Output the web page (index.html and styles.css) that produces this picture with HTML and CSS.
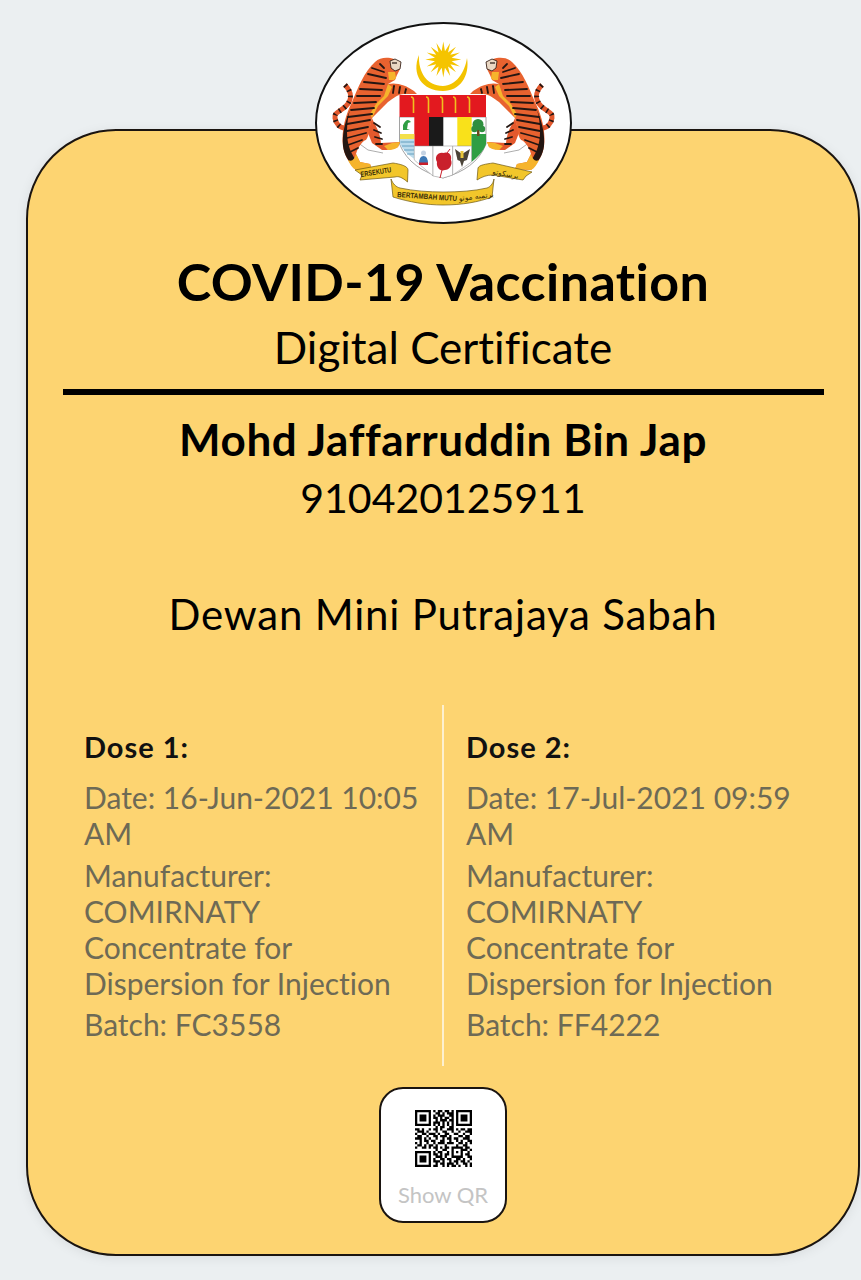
FILE: index.html
```html
<!DOCTYPE html>
<html lang="en">
<head>
<meta charset="utf-8">
<title>COVID-19 Vaccination Digital Certificate</title>
<link rel="stylesheet" href="styles.css">
</head>
<body>
<main class="card">
  <div class="crest">
    <svg class="crest-svg" viewBox="0 0 258 204" aria-hidden="true">
      <ellipse cx="129.5" cy="101" rx="127.5" ry="100" fill="#fff" stroke="#111" stroke-width="2"/>
      <polygon transform="translate(129.3 37.5)" fill="#f5c400" points="0,-18 1.66,-8.34 6.9,-16.6 4.72,-7.07 12.7,-12.7 7.07,-4.72 16.6,-6.9 8.34,-1.66 18,0 8.34,1.66 16.6,6.9 7.07,4.72 12.7,12.7 4.72,7.07 6.9,16.6 1.66,8.34 0,18 -1.66,8.34 -6.9,16.6 -4.72,7.07 -12.7,12.7 -7.07,4.72 -16.6,6.9 -8.34,1.66 -18,0 -8.34,-1.66 -16.6,-6.9 -7.07,-4.72 -12.7,-12.7 -4.72,-7.07 -6.9,-16.6 -1.66,-8.34"/>
      <path d="M105 33 C97 52 108 69 129 69 C146 69 156 54 153 36 C151 50 142 64 129 64 C113 64 104 50 105 33Z" fill="#f3c300"/>

      <path d="M85.5 95 H172 V122 C165 140 150 150 129 156 C108 150 93 140 85.5 122Z" fill="#fff" stroke="#8a8a8a" stroke-width=".8"/>
      <rect x="85.5" y="73" width="86.5" height="22" fill="#e3191f"/>
      <g stroke="#f0bf1e" stroke-width="1.6" fill="none">
        <path d="M97 75 q2.500 0 2.500 3 v13"/><path d="M112 75 q2.500 0 2.500 3 v13"/><path d="M126 75 q2.500 0 2.500 3 v13"/><path d="M139 75 q2.500 0 2.500 3 v13"/><path d="M153 75 q2.500 0 2.500 3 v13"/>
      </g>
      <rect x="100.300" y="95" width="14.700" height="29" fill="#e3191f"/>
      <rect x="115" y="95" width="14.300" height="29" fill="#1a1a1a"/>
      <rect x="143.300" y="95" width="14.400" height="29" fill="#f9e11a"/>
      <path d="M157.500 112 H172 V122 C170 128 165 134 157.500 140Z" fill="#2f9e44"/>
      <rect x="163" y="106" width="2.500" height="8" fill="#6d4a1c"/>
      <circle cx="164" cy="102.500" r="5.500" fill="#2f8f3f"/>
      <circle cx="160.500" cy="107" r="3.200" fill="#2f8f3f"/>
      <circle cx="168" cy="107" r="3.200" fill="#2f8f3f"/>
      <path d="M89 103 q4 -8 8 -3 l-3 1 l-1 6 l3 1 h-7Z" fill="#2f9e44"/>
      <rect x="86" y="112" width="14.300" height="5" fill="#f3e04a"/>
      <path d="M86 117 H100.300 V137 C94 133 89 128 86 122Z" fill="#bcdcec"/>
      <g stroke="#4d8fb5" stroke-width=".8"><path d="M86.500 120 h13.500"/><path d="M88 124 h12"/><path d="M90 128 h10"/><path d="M93 132 h7"/></g>
      <path d="M100.300 124 V138 L119 154 V124Z" fill="#fff" stroke="#8a8a8a" stroke-width=".5"/>
      <path d="M105 142 q0 -8 4.500 -8 q4.500 0 4.500 8Z" fill="#3d78b5"/>
      <circle cx="109.500" cy="131" r="2.500" fill="#c6d4e4"/>
      <rect x="105" y="140.500" width="9" height="2.500" fill="#c9202c"/>
      <path d="M119 124 V154 L129 156 L138.700 153 V124Z" fill="#fff" stroke="#8a8a8a" stroke-width=".5"/>
      <path d="M129 131 c6 -2 9 2 8 7 c2 5 -2 10 -6 10 c-5 2 -9 -3 -8 -8 c-3 -5 1 -10 6 -9Z" fill="#c9202c"/>
      <path d="M128 148 l-2 8" stroke="#c9202c" stroke-width="1"/>
      <path d="M133 131 l3 -4" stroke="#c9202c" stroke-width="1"/>
      <path d="M138.700 124 V153 L157.500 140 V124Z" fill="#fff" stroke="#8a8a8a" stroke-width=".5"/>
      <path d="M141 127 L148 132 L156 127 L153 138 L150 139 L148 145 L146 139 L143.500 138Z" fill="#4a4338"/>
      <rect x="146.500" y="129" width="3" height="7" fill="#e8c53a"/>

      <g id="tiger">
        <path d="M31 63 C38 70 38 78 32 84 C26 90 20 90 21 96 C22 102 26 106 31 106" fill="none" stroke="#e4592d" stroke-width="5"/>
        <path d="M31 63 C38 70 38 78 32 84 C26 90 20 90 21 96 C22 102 26 106 31 106" fill="none" stroke="#241612" stroke-width="5" stroke-dasharray="1.600 4.500"/>
        <path d="M43 120 L54 128 L69 131" fill="none" stroke="#8a8a8a" stroke-width=".7"/>
        <path d="M58 96 C60 102 66 108 67 121 L86 120 L84 125 C78 128 74 128 68 128 L58 121 L54 111Z" fill="#e4592d"/>
        <path d="M61 40 C66 35 74 35 80 37 L87 40 L86 47 L83 53 L81 58 L74 62 C82 60 92 63 100 69 L103 72 L90 72 C84 72 80 76 74 80 L64 90 L58 96 C56 104 56 112 52 118 C50 118 44 124 42 132 L46 140 L56 142 L58 147 L42 148 C34 140 30 132 29 124 C27 108 32 92 38 80 C44 66 50 50 61 40Z" fill="#e8622f"/>
        <path d="M36 88 C31 100 28 112 29 124 C30 132 34 140 42 146 L45 141 C37 134 33 122 33 110 C33 102 34 94 36 88Z" fill="#241612"/>
        <path d="M42 132 L46 140 L56 142 L58 147 L42 148 C38 146 36 142 34 138 C38 140 40 138 42 132Z" fill="#f6b42c"/>
        <path d="M74 62 L78 65 L74 74 L64 84 L58 96 L56 92 L62 82 L70 74Z" fill="#f6b42c"/>
        <path d="M84 125 L86 120 L78 121 L70 124 L74 128 C78 128 82 127 84 125Z" fill="#f6b42c"/>
        <path d="M74 50 L81 50 L82 56 L80 58 L75 58Z" fill="#f6b42c"/>
        <g stroke="#241612" stroke-width="1.800" fill="none" stroke-linecap="round">
          <path d="M58 46 L70 50"/><path d="M54 52 L72 56"/><path d="M50 60 L70 62"/><path d="M46 67 L68 68"/><path d="M43 74 L66 74"/><path d="M40 81 L62 80"/><path d="M37 88 L60 86"/><path d="M34 95 L58 92"/><path d="M33 102 L56 98"/><path d="M33 109 L54 105"/><path d="M33 116 L52 111"/><path d="M34 123 L48 118"/><path d="M36 130 L44 126"/>
          <path d="M60 101 L66 105"/><path d="M60 108 L67 111"/><path d="M61 115 L68 117"/><path d="M62 122 L68 122"/><path d="M80 64 L79 71"/><path d="M86 65 L85 71"/><path d="M92 67 L91 71"/><path d="M66 42 L70 46"/>
        </g>
        <path d="M76 39 L81 37 L87 40 L86 47 L81 49 L77 46Z" fill="#ead8c4" stroke="#241612" stroke-width=".8"/>
        <path d="M78 41 l5 0" stroke="#241612" stroke-width="1.200"/>
      </g>
      <use href="#tiger" transform="matrix(-1 0 0 1 259 0)"/>

      <path d="M41 148 L79 141 C86 142 94 144 94 148 L93.500 160 C88 155 84 154 81 155 L46 158 L48 153Z" fill="#f2c62b" stroke="#6d5712" stroke-width=".7"/>
      <path d="M218 150 L179 141 C172 142 165 143 164 146 L163 158 C168 155 172 153 179 153 L209 158 L212 154Z" fill="#f2c62b" stroke="#6d5712" stroke-width=".7"/>
      <path d="M77 157 C79 162 82 165 86 166 C100 169 115 170 129 170 C145 170 160 169 173 166 C176 165 179 162 180 157 L178 175 C165 180 148 183 129 183 C112 183 95 180 79 175Z" fill="#f2c62b" stroke="#6d5712" stroke-width=".7"/>
      <text class="motto" x="47" y="155" textLength="31" lengthAdjust="spacingAndGlyphs" transform="rotate(-9 47 155)">ERSEKUTU</text>
      <text class="motto" x="83" y="175" textLength="60" lengthAdjust="spacingAndGlyphs" transform="rotate(4 83 175)">BERTAMBAH MUTU</text>
      <text class="jawi" x="145" y="179" transform="rotate(-7 145 179)">برتمبه موتو</text>
      <text class="jawi" x="178" y="152" transform="rotate(10 178 152)">برسکوتو</text>
    </svg>
  </div>

  <header class="heading">
    <h1 class="title">COVID-19 Vaccination</h1>
    <p class="subtitle">Digital Certificate</p>
  </header>
  <hr class="rule">
  <h2 class="name">Mohd Jaffarruddin Bin Jap</h2>
  <p class="ident">910420125911</p>
  <p class="venue">Dewan Mini Putrajaya Sabah</p>

  <section class="doses">
    <article class="dose">
      <h3 class="dose-title">Dose 1:</h3>
      <p class="dose-line">Date: 16-Jun-2021 10:05 AM</p>
      <p class="dose-line">Manufacturer: COMIRNATY Concentrate for Dispersion for Injection</p>
      <p class="dose-line">Batch: FC3558</p>
    </article>
    <article class="dose dose-right">
      <h3 class="dose-title">Dose 2:</h3>
      <p class="dose-line">Date: 17-Jul-2021 09:59 AM</p>
      <p class="dose-line">Manufacturer: COMIRNATY Concentrate for Dispersion for Injection</p>
      <p class="dose-line">Batch: FF4222</p>
    </article>
  </section>

  <button class="qr-button" type="button">
    <svg class="qr" viewBox="0 0 25 25" aria-hidden="true">
      <path fill="#000" d="M0 0h7v7H0zM18 0h7v7h-7zM0 18h7v7H0z"/>
      <path fill="#fff" d="M1 1h5v5H1zM19 1h5v5h-5zM1 19h5v5H1z"/>
      <path fill="#000" d="M2 2h3v3H2zM20 2h3v3h-3zM2 20h3v3H2z"/>
      <path fill="none" stroke="#000" d="M8 .5h1M10 .5h2M13 .5h2M16 .5h1M9 1.500h2M12 1.500h1M14 1.500h3M8 2.500h1M10 2.500h3M15 2.500h2M8 3.500h2M11 3.500h1M13 3.500h2M16 3.500h1M9 4.500h1M11 4.500h3M15 4.500h2M8 5.500h3M12 5.500h1M14 5.500h1M16 5.500h1M8 6.500h1M10 6.500h1M12 6.500h1M14 6.500h1M16 6.500h1M9 7.500h1M11 7.500h2M15 7.500h2M0 8.500h2M3 8.500h1M6 8.500h1M8 8.500h2M11 8.500h1M14 8.500h3M18 8.500h1M20 8.500h2M23 8.500h2M1 9.500h3M5 9.500h1M9 9.500h1M12 9.500h2M16 9.500h1M19 9.500h1M22 9.500h3M0 10.500h1M3 10.500h2M6 10.500h3M10 10.500h1M13 10.500h2M17 10.500h2M21 10.500h1M24 10.500h1M1 11.500h2M5 11.500h1M8 11.500h2M11 11.500h3M15 11.500h1M19 11.500h2M22 11.500h2M0 12.500h3M4 12.500h1M6 12.500h1M9 12.500h1M12 12.500h1M14 12.500h2M17 12.500h2M21 12.500h3M2 13.500h1M4 13.500h2M7 13.500h2M11 13.500h2M15 13.500h1M18 13.500h1M20 13.500h1M23 13.500h2M0 14.500h1M2 14.500h1M5 14.500h1M8 14.500h1M10 14.500h3M14 14.500h3M19 14.500h2M22 14.500h1M24 14.500h1M1 15.500h2M4 15.500h1M6 15.500h2M9 15.500h1M13 15.500h1M18 15.500h1M21 15.500h2M0 16.500h1M3 16.500h2M6 16.500h1M8 16.500h2M11 16.500h1M13 16.500h2M16 16.500h5M22 16.500h2M9 17.500h1M12 17.500h2M16 17.500h1M20 17.500h3M24 17.500h1M8 18.500h1M10 18.500h2M14 18.500h1M16 18.500h1M18 18.500h1M20 18.500h1M23 18.500h1M8 19.500h2M11 19.500h1M13 19.500h2M16 19.500h1M20 19.500h1M22 19.500h2M9 20.500h3M13 20.500h1M16 20.500h5M23 20.500h2M8 21.500h1M11 21.500h2M14 21.500h2M18 21.500h2M21 21.500h1M24 21.500h1M8 22.500h3M12 22.500h1M15 22.500h1M17 22.500h2M20 22.500h2M23 22.500h1M9 23.500h1M11 23.500h2M14 23.500h3M18 23.500h1M21 23.500h2M24 23.500h1M8 24.500h2M12 24.500h1M14 24.500h1M16 24.500h2M19 24.500h1M22 24.500h1M24 24.500h1"/>
    </svg>
    <span class="qr-label">Show QR</span>
  </button>
</main>
</body>
</html>
```

FILE: styles.css
```css
* {
  box-sizing: border-box;
}

html,
body {
  margin: 0;
  padding: 0;
}

body {
  width: 861px;
  height: 1280px;
  overflow: hidden;
  background: #ebeff1;
  font-family: "Lato", "Noto Sans", sans-serif;
  font-variant-ligatures: none;
  color: #000;
  padding: 129px 1px 0 26px;
}

.card {
  position: relative;
  width: 834px;
  height: 1127px;
  background: #fdd471;
  border: 2px solid #1a1410;
  border-radius: 90px;
  box-shadow: 0 2px 12px rgba(0, 0, 0, 0.08);
  display: flex;
  flex-direction: column;
  align-items: center;
  padding-top: 122px;
}

.crest {
  position: absolute;
  top: -109px;
  left: 286px;
  width: 258px;
  height: 204px;
}

.crest-svg {
  display: block;
  width: 100%;
  height: 100%;
}

.motto {
  font-family: "Liberation Sans", sans-serif;
  font-size: 7.5px;
  font-weight: 700;
  fill: #3a2d08;
}

.jawi {
  font-family: "DejaVu Sans", sans-serif;
  font-size: 7.5px;
  fill: #3a2d08;
}

.heading {
  text-align: center;
}

.title {
  margin: 0;
  font-size: 52px;
  line-height: 56px;
  font-weight: 700;
  letter-spacing: 0.4px;
}

.subtitle {
  margin: 12px 0 0;
  font-size: 44px;
  line-height: 52px;
  font-weight: 400;
}

.rule {
  width: 761px;
  height: 6px;
  margin: 16px 0 0;
  border: 0;
  background: #000;
}

.name {
  margin: 19px 0 0;
  font-size: 44px;
  line-height: 50px;
  font-weight: 700;
  letter-spacing: 0.6px;
}

.ident {
  margin: 9px 0 0;
  font-size: 41px;
  line-height: 50px;
}

.venue {
  margin: 66px 0 0;
  font-size: 42px;
  line-height: 50px;
  letter-spacing: 0.8px;
}

.doses {
  display: grid;
  grid-template-columns: 416px 416px;
  width: 100%;
  margin-top: 66px;
  height: 361px;
}

.dose {
  padding: 25px 20px 0 56px;
  border-right: 2px solid #fdf0cf;
}

.dose-right {
  border-right: 0;
  padding-left: 22px;
  padding-right: 60px;
}

.dose-title {
  margin: 0 0 15px;
  font-size: 29px;
  line-height: 34px;
  font-weight: 700;
  letter-spacing: 1px;
  color: #111;
}

.dose-line {
  margin: 0 0 5.5px;
  font-size: 30px;
  line-height: 36px;
  color: #6e6a55;
}

.qr-button {
  display: flex;
  flex-direction: column;
  align-items: center;
  width: 128px;
  height: 136px;
  margin-top: 21px;
  padding: 21px 0 0;
  background: #fff;
  border: 2px solid #1a1410;
  border-radius: 24px;
  font-family: inherit;
}

.qr {
  display: block;
  width: 57px;
  height: 57px;
}

.qr-label {
  margin-top: 14px;
  font-size: 22px;
  line-height: 28px;
  color: #c4c4c4;
}
```
